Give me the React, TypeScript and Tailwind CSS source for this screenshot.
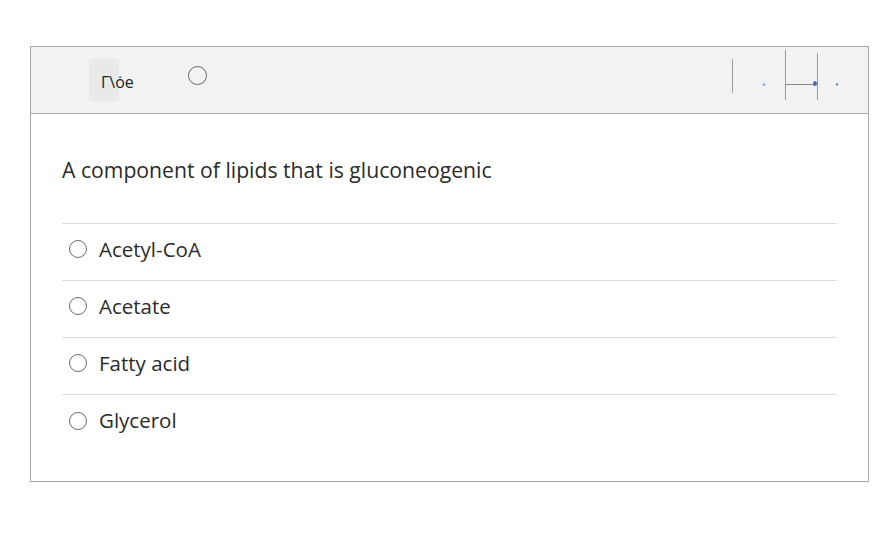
const options = ["Acetyl-CoA", "Acetate", "Fatty acid", "Glycerol"];

const Radio = () => (
  <span className="inline-block w-[18px] h-[18px] rounded-full border-[1.5px] border-[#6b6b6b] bg-white shrink-0" />
);

// faint toolbar marks at the right of the header
const HeaderMarks = () => (
  <svg width="120" height="66" viewBox="0 0 120 66" className="mr-[18px]">
    <line x1="2.5" y1="12" x2="2.5" y2="46" stroke="#9a9a9a" />
    <circle cx="34" cy="37.5" r="1.5" fill="#8fb4df" />
    <line x1="55.5" y1="3" x2="55.5" y2="53" stroke="#9a9a9a" />
    <line x1="55" y1="37.5" x2="85" y2="37.5" stroke="#8a8a8a" />
    <ellipse cx="85" cy="36.5" rx="2" ry="2.5" fill="#3a6fc0" />
    <line x1="87.5" y1="6" x2="87.5" y2="53" stroke="#9a9a9a" />
    <circle cx="107" cy="37.5" r="1.2" fill="#5c8fd0" />
  </svg>
);

export default function App() {
  return (
    <div className="w-[890px] h-[547px] bg-white pt-[46px] pl-[30px] font-['Open_Sans',sans-serif] text-[#2b2b2b]">
      <div className="w-[839px] h-[436px] border border-[#a6a6a6] flex flex-col">
        <div className="h-[67px] bg-[#f2f2f2] border-b border-[#a6a6a6] flex items-center">
          <div className="ml-[58px] w-[30px] h-[42px] bg-[#e9e9e9] flex items-center">
            <span className="ml-[12px] mt-[4px] text-[16px] text-[#222] whitespace-nowrap">Γ\ȯe</span>
          </div>
          <span className="ml-[69px] inline-block w-[19px] h-[19px] rounded-full border-[1.5px] border-[#666] -mt-[10px]" />
          <div className="ml-auto">
            <HeaderMarks />
          </div>
        </div>
        <div className="px-[31px]">
          <p className="pt-[43px] pb-[40px] text-[21.2px] leading-[26px]">
            A component of lipids that is gluconeogenic
          </p>
          <div className="border-t border-[#dcdcdc]">
            {options.map((o) => (
              <div
                key={o}
                className="h-[57px] border-b border-[#dcdcdc] last:border-b-0 flex items-center gap-[12px] pl-[7px] pb-[6px]"
              >
                <Radio />
                <span className="text-[20.5px]">{o}</span>
              </div>
            ))}
          </div>
        </div>
      </div>
    </div>
  );
}
